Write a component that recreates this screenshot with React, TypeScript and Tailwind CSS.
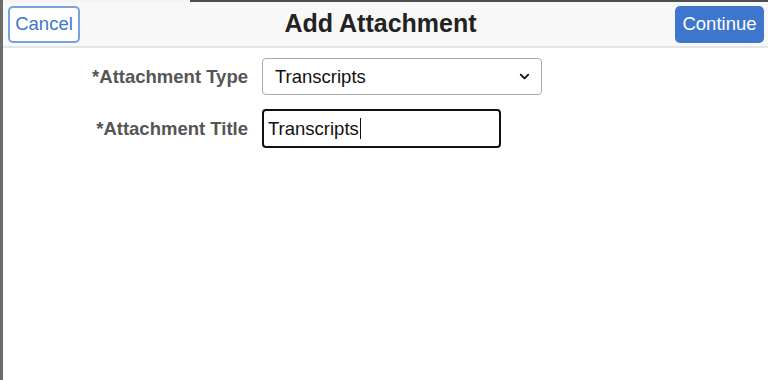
import { ChevronDown } from "lucide-react";

const font = { fontFamily: '"Liberation Sans", Arial, sans-serif' };

export default function App() {
  return (
    <div className="flex h-[380px] w-[768px] bg-white" style={font}>
      <div className="w-[3px] shrink-0 bg-[#6b6b6b]" />
      <div className="flex min-w-0 flex-1 flex-col">
        <div className="flex h-[2px]">
          <div className="w-[187px] bg-[#f4f4f4]" />
          <div className="flex-1 bg-[#4e4e52]" />
        </div>
        <header className="flex h-[46px] items-center justify-between border-b-2 border-[#e3e6eb] bg-[#f8f8f8] pl-[5px] pr-[4px]">
          <button className="h-[37px] w-[72px] rounded-[5px] border-2 border-[#7aa1e0] bg-white text-[18.5px] text-[#3d76cc]">
            Cancel
          </button>
          <h1 className="ml-[6px] text-[25px] font-bold text-[#222]">Add Attachment</h1>
          <button className="h-[37px] w-[89px] rounded-[5px] bg-[#3d76cc] text-[18.5px] text-white">
            Continue
          </button>
        </header>
        <main className="flex flex-col gap-[14px] pt-[10px]">
          <div className="flex items-center">
            <label className="w-[245px] text-right text-[18.5px] font-bold text-[#555]">
              *Attachment Type
            </label>
            <div className="ml-[14px] flex h-[37px] w-[280px] items-center justify-between rounded-[4px] border border-[#aaa] bg-white pl-[12px] pr-[9px] text-[18.5px] text-[#111]">
              <span>Transcripts</span>
              <ChevronDown className="size-[15px] text-[#111]" strokeWidth={3} />
            </div>
          </div>
          <div className="flex items-center">
            <label className="w-[245px] text-right text-[18.5px] font-bold text-[#555]">
              *Attachment Title
            </label>
            <div className="ml-[14px] flex h-[39px] w-[239px] items-center rounded-[4px] border-2 border-[#111] bg-white pl-[4px] text-[18.5px] text-[#111]">
              <span>Transcripts</span>
              <span className="ml-[1px] h-[21px] w-[1.5px] bg-[#111]" />
            </div>
          </div>
        </main>
      </div>
    </div>
  );
}
